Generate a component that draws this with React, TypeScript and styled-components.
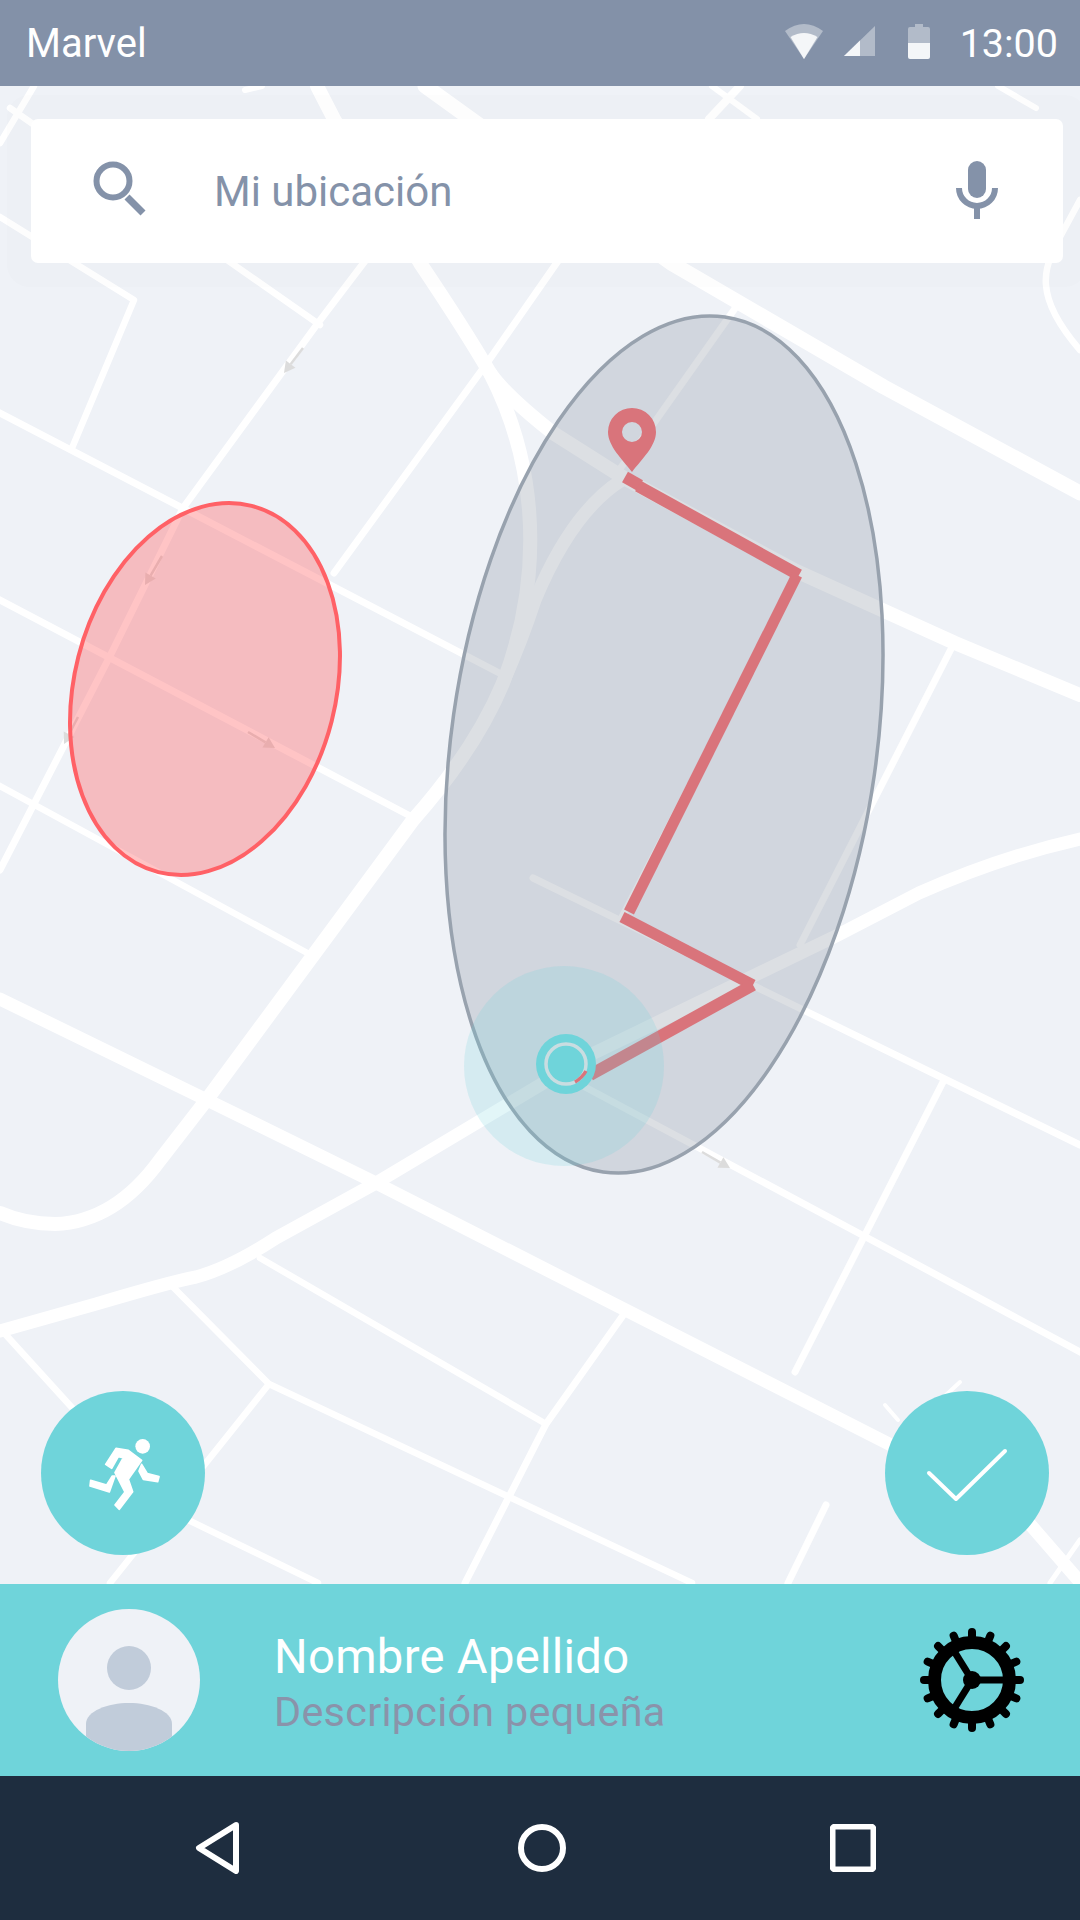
import React from "react";
import styled, { createGlobalStyle } from "styled-components";

const Global = createGlobalStyle`
  html, body { margin: 0; padding: 0; background: #eff2f7; }
  #root { width: 1080px; height: 1920px; }
`;

const Screen = styled.div`
  width: 1080px;
  height: 1920px;
  display: flex;
  flex-direction: column;
  overflow: hidden;
  font-family: Roboto, "Liberation Sans", sans-serif;
`;

const StatusBar = styled.header`
  height: 86px;
  flex: none;
  display: flex;
  align-items: center;
  justify-content: space-between;
  padding: 0 22px 0 26px;
  background: #8391a8;
  color: #fff;
  font-size: 40px;
`;

const StatusIcons = styled.div`
  display: flex;
  align-items: center;
  gap: 21px;
`;

const StatusIconSvg = styled.svg<{ $gapBefore?: number }>`
  display: block;
  fill: #f4f6f8;
  margin-top: -4px;
  margin-left: ${(p) => p.$gapBefore ?? 0}px;
`;

const Clock = styled.span`
  margin-left: 9px;
  font-size: 39.5px;
`;

const Ghost = styled.path`
  opacity: 0.42;
`;

const MapArea = styled.main`
  position: relative;
  flex: 1;
  background: #eff2f7;
  overflow: hidden;
`;

const MapSvg = styled.svg`
  position: absolute;
  inset: 0;
  display: block;
`;

const Road = styled.path<{ $w: number }>`
  fill: none;
  stroke: #fff;
  stroke-width: ${(p) => p.$w}px;
  stroke-linecap: round;
  stroke-linejoin: round;
`;

const OneWay = styled.path`
  fill: none;
  stroke: #dcdcdc;
  stroke-width: 2.5px;
`;

const ArrowHead = styled.path`
  fill: #dcdcdc;
`;

const RedZone = styled.ellipse`
  fill: rgba(255, 97, 102, 0.375);
  stroke: #ff6166;
  stroke-width: 4px;
`;

const GrayZone = styled.ellipse`
  fill: rgba(155, 164, 175, 0.35);
  stroke: #98a2ae;
  stroke-width: 3.5px;
`;

const RouteLine = styled.path<{ $w: number }>`
  fill: none;
  stroke: #d9747b;
  stroke-width: ${(p) => p.$w}px;
`;

const Pin = styled.path`
  fill: #d9747b;
  fill-rule: evenodd;
`;

const Halo = styled.circle`
  fill: rgba(111, 212, 218, 0.2);
`;

const MarkerDisc = styled.circle`
  fill: #6fd4da;
`;

const MarkerRing = styled.circle`
  fill: none;
  stroke: #c9dde1;
  stroke-width: 3.5px;
`;

const SearchCard = styled.div`
  position: absolute;
  left: 31px;
  top: 33px;
  width: 1032px;
  height: 144px;
  box-sizing: border-box;
  display: flex;
  align-items: center;
  padding: 0 65px 0 60px;
  background: #fff;
  border-radius: 7px;
  box-shadow: 0 0 0 24px rgba(50, 70, 100, 0.01);
`;

const SearchIcon = styled.svg`
  display: block;
  flex: none;
  stroke: #8492a9;
  fill: none;
`;

const SearchText = styled.span`
  flex: 1;
  margin-left: 65px;
  color: #8492a9;
  font-size: 42px;
`;

const MicIcon = styled.svg`
  display: block;
  flex: none;
  margin-top: -2px;
`;

const Fab = styled.button<{ $side: "left" | "right" }>`
  position: absolute;
  ${(p) => (p.$side === "left" ? "left: 41px;" : "right: 31px;")}
  bottom: 29px;
  width: 164px;
  height: 164px;
  padding: 0;
  border: none;
  border-radius: 50%;
  background: #6fd4da;
  display: flex;
  align-items: center;
  justify-content: center;
`;

const FabIcon = styled.svg`
  display: block;
  fill: #fff;
`;

const RunnerPart = styled.path`
  stroke: #fff;
  stroke-width: 5px;
  stroke-linejoin: round;
`;

const ProfileBar = styled.section`
  height: 192px;
  flex: none;
  display: flex;
  align-items: center;
  padding: 0 55px 0 58px;
  background: #6fd4da;
`;

const Avatar = styled.svg`
  display: block;
  flex: none;
`;

const ProfileText = styled.div`
  flex: 1;
  margin-left: 74px;
  padding-top: 4px;
  display: flex;
  flex-direction: column;
`;

const Name = styled.div`
  color: #fff;
  font-size: 47.2px;
  line-height: 56px;
  letter-spacing: 0.3px;
`;

const Desc = styled.div`
  margin-top: 4px;
  color: #8a93aa;
  font-size: 41.3px;
  line-height: 46px;
  letter-spacing: 0.3px;
`;

const GearIcon = styled.svg`
  display: block;
  flex: none;
`;

const NavBar = styled.nav`
  height: 144px;
  flex: none;
  position: relative;
  display: grid;
  grid-template-columns: 434px 300px 346px;
  align-items: center;
  background: #1e2d3f;
`;

const NavIcon = styled.svg<{ $x: number }>`
  display: block;
  margin-left: ${(p) => p.$x}px;
  fill: none;
  stroke: #fff;
  stroke-width: 6px;
  stroke-linejoin: round;
`;

const roads: [string, number][] = [
  ["M317 86 L334 119 L420 263 Q465 330 490 373 C530 450 550 560 503 683 Q475 750 413 820 L208 1098 L160 1160 Q115 1222 55 1224 Q25 1224 0 1213", 14],
  ["M490 373 Q505 395 553 433 L624 478 L796 571 L955 643 L1080 695", 14],
  ["M622 480 C590 500 560 540 535 600 Q522 640 503 683", 13],
  ["M425 86 L671 263 L884 387 L1080 493", 15],
  ["M1080 839 Q1000 857 919 893 L836 936 L592 1054 L376 1183 L276 1238 Q230 1268 196 1277 Q170 1282 96 1304 L0 1331", 13],
  ["M0 999 L207 1100 L376 1183 L891 1445 L1000 1498 L1022 1515 L1080 1582", 13],
  ["M0 217 L134 300 L72 448", 6.5],
  ["M0 413 L505 676", 7],
  ["M0 600 L414 818", 7],
  ["M0 786 L311 955", 6.5],
  ["M400 215 L318 323 L183 508 L110 656 L0 870", 7],
  ["M10 108 L320 325", 6.5],
  ["M34 86 L0 143", 6.5],
  ["M590 215 L487 363 L334 573", 7],
  ["M736 307 L654 423 L619 470", 7],
  ["M1080 200 L1060 237 Q1044 265 1046 285 Q1048 313 1080 350", 6.5],
  ["M245 90 L262 86", 6],
  ["M740 86 L709 119", 8],
  ["M712 86 L757 119", 6],
  ["M998 86 L1036 108", 6],
  ["M533 878 L1080 1145", 7],
  ["M585 1087 L864 1236 L1080 1352", 7],
  ["M943 1082 L795 1372", 7],
  ["M951 649 L800 945", 7],
  ["M800 573 L622 917", 7],
  ["M260 1258 L546 1424", 6.5],
  ["M624 1314 L546 1424 L465 1583", 7],
  ["M172 1286 L269 1384 L692 1583", 6.5],
  ["M269 1384 L110 1583", 6.5],
  ["M6 1335 L95 1433 L150 1500 L184 1518 L318 1583", 6.5],
  ["M826 1505 L788 1583", 7],
  ["M885 1405 L898 1420", 4],
  ["M960 1382 L946 1395", 4],
  ["M1080 1540 L1050 1583", 5],
];

const arrows: [number, number, number, number][] = [
  [303, 348, 284, 373],
  [162, 556, 145, 585],
  [78, 717, 64, 744],
  [248, 732, 275, 748],
  [702, 1152, 730, 1168],
];

function Arrow({ a }: { a: [number, number, number, number] }) {
  const [x1, y1, x2, y2] = a;
  const len = Math.hypot(x2 - x1, y2 - y1);
  const ux = (x2 - x1) / len;
  const uy = (y2 - y1) / len;
  const bx = x2 - ux * 11;
  const by = y2 - uy * 11;
  return (
    <>
      <OneWay d={`M${x1} ${y1} L${bx} ${by}`} />
      <ArrowHead d={`M${x2} ${y2} L${bx - uy * 6} ${by + ux * 6} L${bx + uy * 6} ${by - ux * 6} Z`} />
    </>
  );
}

function MapDrawing() {
  return (
    <MapSvg width="1080" height="1498" viewBox="0 86 1080 1498">
      {roads.map(([d, w], i) => (
        <Road key={i} d={d} $w={w} />
      ))}
      {arrows.map((a, i) => (
        <Arrow key={i} a={a} />
      ))}
      <RedZone cx="205" cy="689" rx="130.7" ry="189" transform="rotate(14.3 205 689)" />
      <GrayZone cx="664" cy="744.5" rx="212.5" ry="431.8" transform="rotate(8.1 664 744.5)" />
      <Pin d="M632 472 C622 459 608 446 608 432 A24 24 0 0 1 656 432 C656 446 642 459 632 472 Z M632 422 A10 10 0 1 0 632 442 A10 10 0 1 0 632 422 Z" />
      <RouteLine $w={12} d="M625 477 L640 485.5" />
      <RouteLine $w={12} d="M638 486 L799 575" />
      <RouteLine $w={11} d="M797 575 L629 912" />
      <RouteLine $w={11} d="M622 917 L753 985" />
      <RouteLine $w={12} d="M753 985 L590 1075" />
      <Halo cx="564" cy="1066" r="100" />
      <MarkerDisc cx="566" cy="1064" r="30" />
      <MarkerRing cx="566" cy="1064" r="20" />
      <RouteLine $w={3.5} d="M575 1082 Q582 1078 586 1071" />
    </MapSvg>
  );
}

const teeth = Array.from({ length: 16 }, (_, i) => (i * Math.PI) / 8);

function Gear() {
  return (
    <GearIcon width="106" height="106" viewBox="-53 -53 106 106">
      <circle r="37.5" fill="none" stroke="#000" strokeWidth="13" />
      {teeth.map((t, i) => (
        <line
          key={i}
          x1={40 * Math.cos(t)}
          y1={40 * Math.sin(t)}
          x2={48 * Math.cos(t)}
          y2={48 * Math.sin(t)}
          stroke="#000"
          strokeWidth="8"
          strokeLinecap="round"
        />
      ))}
      <circle r="9" fill="#000" />
      {[0, 122, 238].map((deg) => (
        <line
          key={deg}
          x2={36 * Math.cos((deg * Math.PI) / 180)}
          y2={36 * Math.sin((deg * Math.PI) / 180)}
          stroke="#000"
          strokeWidth="7"
        />
      ))}
    </GearIcon>
  );
}

export default function App() {
  return (
    <Screen>
      <Global />
      <StatusBar>
        <span>Marvel</span>
        <StatusIcons>
          <StatusIconSvg width="38" height="35" viewBox="0 0 38 35">
            <Ghost d="M19 35 L0 7 Q19 -7 38 7 Z" />
            <path d="M5.5 13 Q19 5 32.5 13 L19 35 Z" />
          </StatusIconSvg>
          <StatusIconSvg width="31" height="30" viewBox="0 0 31 30">
            <Ghost d="M31 0 L31 30 L0 30 Z" />
            <path d="M16 14.5 L16 30 L0 30 Z" />
          </StatusIconSvg>
          <StatusIconSvg $gapBefore={12} width="22" height="35" viewBox="0 0 22 35">
            <Ghost d="M7 0 H15 V3 H20 Q22 3 22 5 V19 H0 V5 Q0 3 2 3 H7 Z" />
            <path d="M0 19 H22 V33 Q22 35 20 35 H2 Q0 35 0 33 Z" />
          </StatusIconSvg>
          <Clock>13:00</Clock>
        </StatusIcons>
      </StatusBar>
      <MapArea>
        <MapDrawing />
        <SearchCard>
          <SearchIcon width="58" height="60" viewBox="0 0 58 60">
            <circle cx="22" cy="20" r="16.5" strokeWidth="6" />
            <line x1="36" y1="36" x2="52" y2="52" strokeWidth="7" />
          </SearchIcon>
          <SearchText>Mi ubicación</SearchText>
          <MicIcon width="42" height="58" viewBox="0 0 42 58">
            <rect x="12" y="0" width="18" height="37" rx="9" fill="#8492a9" />
            <path d="M3 27 A18 18 0 0 0 39 27" fill="none" stroke="#8492a9" strokeWidth="6" />
            <rect x="18" y="46" width="6" height="12" fill="#8492a9" />
          </MicIcon>
        </SearchCard>
        <Fab $side="left">
          <FabIcon width="84" height="84" viewBox="63 60 252 252">
            <circle cx="248" cy="106" r="22" />
            <RunnerPart d="M168 112 L205 118 L245 148 L205 205 L218 242 L178 295 L165 282 L195 243 L165 185 L190 140 L175 137 L155 172 L137 160 Z" />
            <RunnerPart d="M165 195 L148 243 L90 225 L92 208 L140 222 L157 195 Z" />
            <RunnerPart d="M245 160 L262 188 L297 197 L293 212 L250 205 L237 180 Z" />
          </FabIcon>
        </Fab>
        <Fab $side="right">
          <FabIcon width="84" height="60" viewBox="0 0 84 60">
            <path d="M4 30 L31 56 L80 8" fill="none" stroke="#fff" strokeWidth="4" strokeLinecap="round" strokeLinejoin="round" />
          </FabIcon>
        </Fab>
      </MapArea>
      <ProfileBar>
        <Avatar width="142" height="142" viewBox="0 0 142 142">
          <defs>
            <clipPath id="avatarClip">
              <circle cx="71" cy="71" r="71" />
            </clipPath>
          </defs>
          <circle cx="71" cy="71" r="71" fill="#eff2f7" />
          <circle cx="71" cy="59" r="22" fill="#c1ccda" />
          <path d="M28 132 V115 C28 102 50 94 71 94 C92 94 114 102 114 115 V142 H28 Z" fill="#c1ccda" clipPath="url(#avatarClip)" />
        </Avatar>
        <ProfileText>
          <Name>Nombre Apellido</Name>
          <Desc>Descripción pequeña</Desc>
        </ProfileText>
        <Gear />
      </ProfileBar>
      <NavBar>
        <NavIcon $x={194} width="46" height="52" viewBox="0 0 46 52">
          <path d="M42 3 L5 26 L42 49 Z" />
        </NavIcon>
        <NavIcon $x={84} width="48" height="48" viewBox="0 0 48 48">
          <circle cx="24" cy="24" r="21" />
        </NavIcon>
        <NavIcon $x={96} width="46" height="48" viewBox="0 0 46 48">
          <rect x="2.5" y="2.5" width="41" height="43" rx="3" />
        </NavIcon>
      </NavBar>
    </Screen>
  );
}
